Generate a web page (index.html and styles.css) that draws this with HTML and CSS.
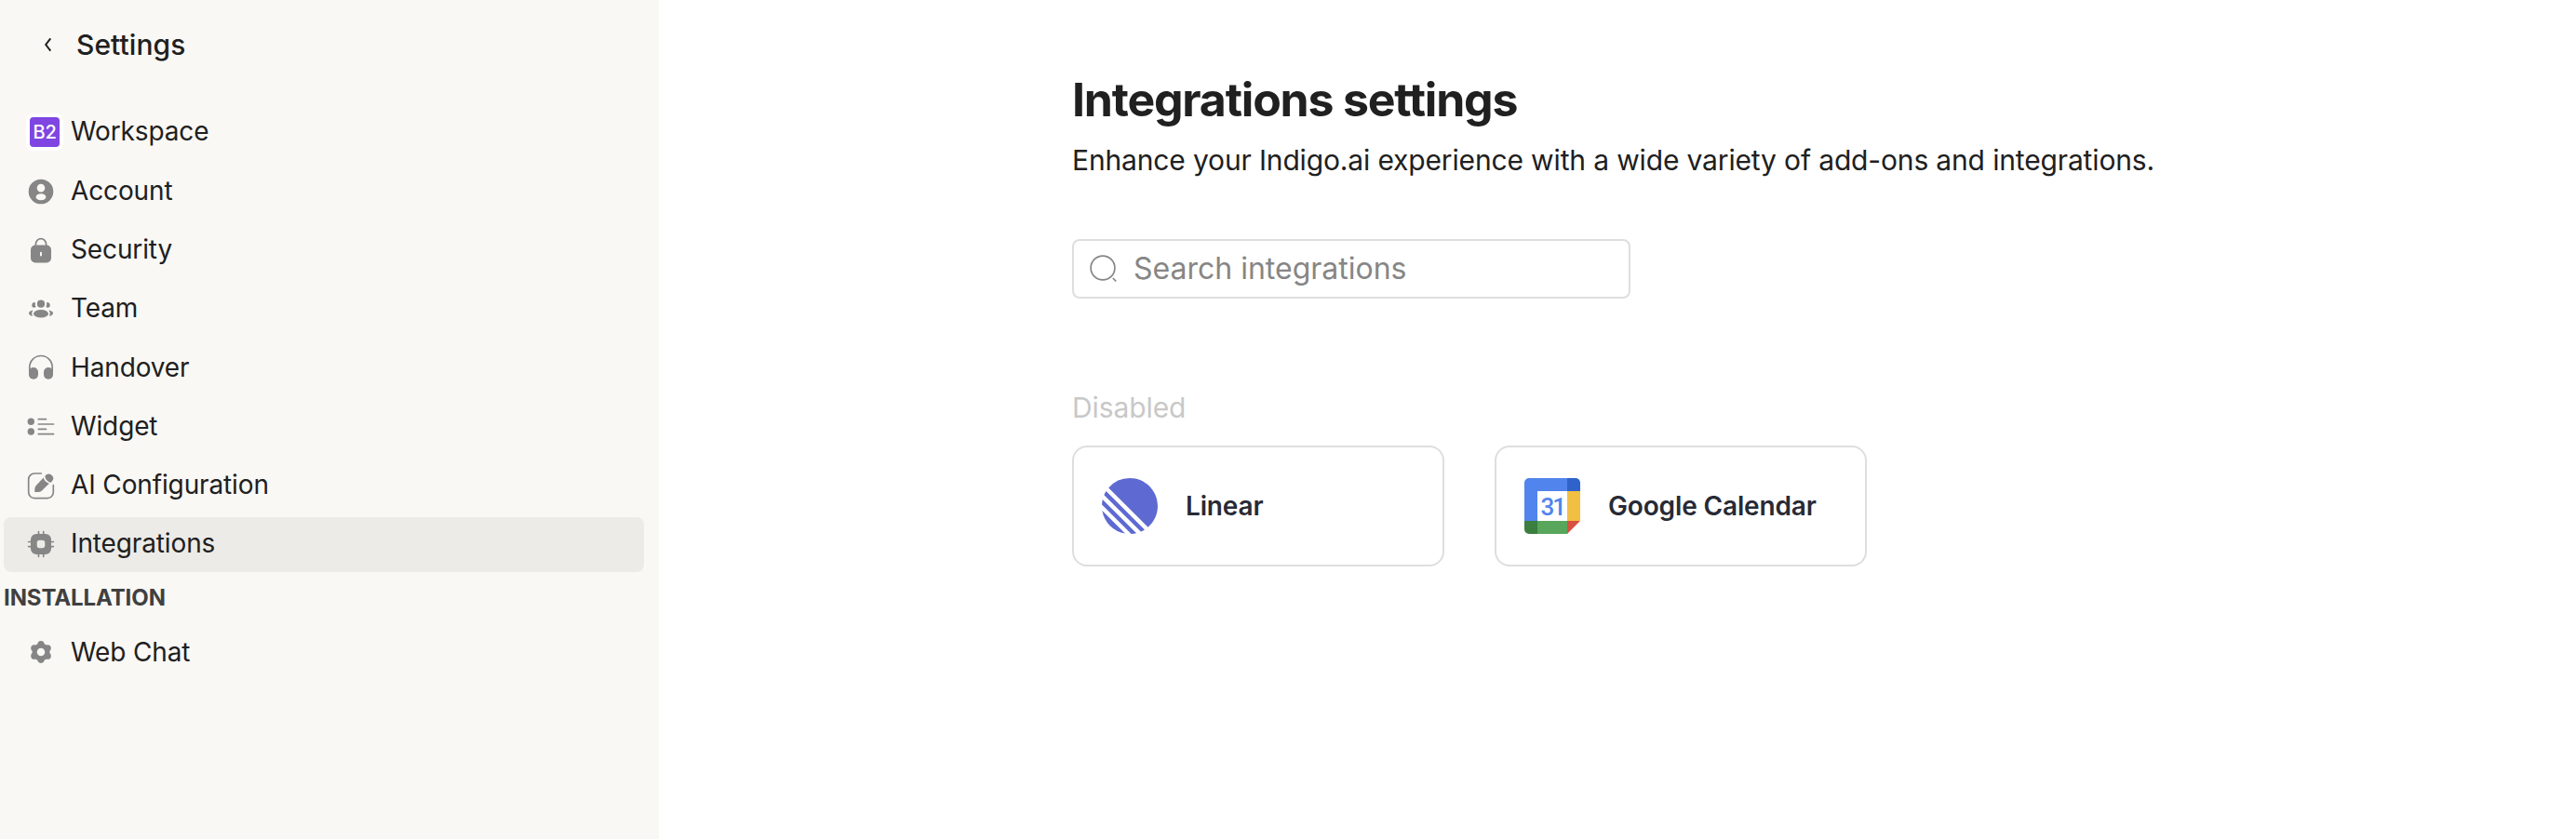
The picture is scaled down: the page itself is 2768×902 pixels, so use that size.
FILE: index.html
```html
<!DOCTYPE html>
<html lang="en">
<head>
<meta charset="utf-8">
<title>Integrations settings</title>
<link rel="stylesheet" href="styles.css">
</head>
<body>
<div class="app">
  <aside class="sidebar">
    <header class="sidebar-head">
      <svg class="back" viewBox="0 0 12 18"><path d="M8.300 2.300 3.200 9l5.100 6.700"/></svg>
      <span class="sidebar-title">Settings</span>
    </header>
    <nav class="nav">
      <a class="item item-workspace"><span class="badge">B2</span><span class="label">Workspace</span></a>
      <a class="item"><svg class="icon" viewBox="0 0 32 32"><path fill-rule="evenodd" d="M16 2.7a13.3 13.3 0 1 1 0 26.6a13.3 13.3 0 1 1 0-26.6zM16 7.8a4.3 4.3 0 1 0 0 8.6a4.3 4.3 0 1 0 0-8.6zM16 18.2c-3.2 0-5.4 1.6-5.4 3.6s2.2 3.5 5.4 3.5s5.4-1.500 5.400-3.500s-2.200-3.600-5.400-3.600z"/></svg><span class="label">Account</span></a>
      <a class="item"><svg class="icon" viewBox="0 0 32 32"><path class="line" d="M10.400 11.500V9.600a5.600 5.900 0 0 1 11.200 0v1.900"/><path fill-rule="evenodd" d="M10 10.500h12a5 5 0 0 1 5 5v9a5 5 0 0 1-5 5H10a5 5 0 0 1-5-5v-9a5 5 0 0 1 5-5zM16 17.800a1 1 0 0 0-1 1v2.600a1 1 0 0 0 2 0v-2.600a1 1 0 0 0-1-1z"/></svg><span class="label">Security</span></a>
      <a class="item"><svg class="icon" viewBox="0 0 32 32"><circle cx="16" cy="10.700" r="4.100"/><ellipse cx="16" cy="21.300" rx="8" ry="4.300"/><path id="side" d="M10 9.500a2.400 2.400 0 0 0-3.700 2.200a2.400 2.400 0 0 0 4.300 2q-1.300-2-.6-4.200zM7.600 17.600C5 18 3 19.200 3 20.800s1.800 2.700 4.100 3C5.800 22 6 19.300 7.600 17.600z"/><use href="#side" transform="matrix(-1 0 0 1 32 0)"/></svg><span class="label">Team</span></a>
      <a class="item"><svg class="icon" viewBox="0 0 32 32"><path class="line" d="M3.800 21v-5.300a12.200 12.200 0 0 1 24.400 0V21"/><rect x="3" y="16" width="10" height="12.800" rx="5"/><rect x="19" y="16" width="10" height="12.800" rx="5"/></svg><span class="label">Handover</span></a>
      <a class="item"><svg class="icon" viewBox="0 0 32 32"><circle cx="5.300" cy="10.300" r="3.700"/><circle cx="5.300" cy="21" r="3.700"/><path class="line" d="M13.300 7.700h8.200M13.300 13h16.200M13.300 18.300h8.200M13.300 23.700h16.200"/></svg><span class="label">Widget</span></a>
      <a class="item"><svg class="icon" viewBox="0 0 32 32"><path class="line" d="M16.300 3H9a6.300 6.300 0 0 0-6.300 6.300v14A6.300 6.300 0 0 0 9 29.600h14a6.300 6.300 0 0 0 6.300-6.300V15.700"/><path d="M9.300 22.900c-.1-3 .1-5.500 1.500-7L18.700 7.400q1.300 4.800 6.200 6.300L17 21.500c-1.500 1.400-4 1.700-7.700 1.400zM20.200 6q3-4 7-1.400q4 3.300.7 6.900q-.7.9-1.400 1.200Q21.500 11.700 20.200 6z"/></svg><span class="label">AI Configuration</span></a>
      <a class="item active"><svg class="icon" viewBox="0 0 32 32"><path class="line" d="M13.500 2.700V6M18.700 2.700V6M13.500 26v3.300M18.700 26v3.300M2.700 13.500H6M2.700 18.600H6M26 13.500h3.300M26 18.600h3.300"/><path fill-rule="evenodd" d="M11 5h10a6 6 0 0 1 6 6v10a6 6 0 0 1-6 6H11a6 6 0 0 1-6-6V11a6 6 0 0 1 6-6zM14.500 11.700a2.800 2.800 0 0 0-2.800 2.800v3a2.800 2.800 0 0 0 2.800 2.800h3a2.800 2.800 0 0 0 2.800-2.800v-3a2.800 2.800 0 0 0-2.800-2.800z"/></svg><span class="label">Integrations</span></a>
    </nav>
    <h2 class="section">INSTALLATION</h2>
    <nav class="nav">
      <a class="item"><svg class="icon" viewBox="0 0 32 32"><g class="gear"><circle cx="16" cy="16" r="6.900"/><path d="M16 7.700v.01M8.810 11.850v.01M8.810 20.150v.01M16 24.300v.01M23.190 20.150v.01M23.190 11.850v.01"/></g></svg><span class="label">Web Chat</span></a>
    </nav>
  </aside>
  <main class="main">
    <div class="content">
      <h1 class="title">Integrations settings</h1>
      <p class="lead">Enhance your Indigo.ai experience with a wide variety of add-ons and integrations.</p>
      <div class="search">
        <svg class="search-icon" viewBox="0 0 32 32"><circle cx="15" cy="15" r="12.900"/><path d="m25.800 26 3.400 3.400"/></svg>
        <span class="placeholder">Search integrations</span>
      </div>
      <h3 class="group">Disabled</h3>
      <div class="cards">
        <div class="card">
          <svg class="logo linear" viewBox="0 0 24 24"><path d="M2.886 4.180A11.982 11.982 0 0 1 11.990 0C18.624 0 24 5.376 24 12.009c0 3.640-1.620 6.903-4.180 9.105L2.887 4.180ZM1.817 5.626l16.556 16.556c-.524.330-1.075.620-1.650.866L.951 7.277c.247-.575.537-1.126.866-1.650ZM.322 9.163l14.515 14.515c-.710.172-1.443.282-2.195.322L0 11.358a12 12 0 0 1 .322-2.195Zm-.170 4.862 9.823 9.824a12.020 12.020 0 0 1-9.824-9.824Z"/></svg>
          <span>Linear</span>
        </div>
        <div class="card">
          <svg class="logo" viewBox="0 0 60 60">
            <path fill="#5184ec" d="M5 0h41v14H14v32H0V5a5 5 0 0 1 5-5z"/>
            <path fill="#2f63c9" d="M46 0h9a5 5 0 0 1 5 5v9H46z"/>
            <path fill="#f1bf42" d="M46 14h14v32H46z"/>
            <path fill="#58a55c" d="M14 46h32v14H14z"/>
            <path fill="#3b7e3f" d="M0 46h14v14H5a5 5 0 0 1-5-5z"/>
            <path fill="#d95040" d="M46 46h14L46 60z"/>
            <text class="day" x="17.500" y="39.600">31</text>
          </svg>
          <span>Google Calendar</span>
        </div>
      </div>
    </div>
  </main>
</div>
</body>
</html>
```
FILE: styles.css
```css
* { box-sizing: border-box; margin: 0; padding: 0; }
body {
  font-family: Inter, "Liberation Sans", sans-serif;
  color: #202020;
  background: #fff;
}

.app { display: flex; width: 2768px; height: 902px; overflow: hidden; }

/* Sidebar */
.sidebar {
  flex: none;
  width: 708px;
  background: #f9f8f5;
  padding: 24px 16px 0 4px;
}
.sidebar-head {
  display: flex;
  align-items: center;
  gap: 24px;
  height: 48px;
  padding-left: 42px;
}
.back { width: 12px; height: 18px; fill: none; stroke: #202020; stroke-width: 2; }
.sidebar-title { font-size: 30px; font-weight: 550; line-height: 48px; letter-spacing: 0.05px; }

.nav { display: flex; flex-direction: column; gap: 4px; }
.sidebar-head + .nav { margin-top: 39px; }
.item {
  display: flex;
  align-items: center;
  gap: 16px;
  height: 59.25px;
  padding-left: 24px;
  border-radius: 8px;
  font-size: 28px;
  line-height: 34px;
  letter-spacing: -0.13px;
}
.item-workspace { height: 61px; gap: 8px; }
.item.active { background: #ecebe7; }
.label { padding-bottom: 1.300px; }
.item-workspace .label { padding-bottom: 2px; }
.icon { flex: none; width: 32px; height: 32px; fill: #868686; }
.line { fill: none; stroke: #868686; stroke-width: 1.700; stroke-linecap: round; stroke-linejoin: round; }
.gear { fill: none; stroke: #868686; stroke-width: 5.200; }
.gear path { stroke-width: 7.200; stroke-linecap: round; }
.badge {
  flex: none;
  width: 40px;
  height: 40px;
  border: 4px solid #fff;
  border-radius: 8px;
  background: #7f46e1;
  color: #fff;
  font-size: 20px;
  font-weight: 500;
  line-height: 32px;
  text-align: center;
}
.section {
  margin: 13px 0 14px;
  font-size: 24px;
  font-weight: 700;
  line-height: 30px;
  letter-spacing: -0.1px;
  color: #404040;
}

/* Main */
.main { flex: 1; }
.content { width: 1172px; margin: 0 auto; padding-top: 77px; }
.title { font-size: 50px; font-weight: 700; line-height: 60px; letter-spacing: -1.200px; }
.lead { margin-top: 17px; font-size: 30px; line-height: 36px; letter-spacing: -0.150px; white-space: nowrap; }
.search {
  display: flex;
  align-items: center;
  gap: 16px;
  width: 600px;
  height: 64px;
  margin-top: 67px;
  padding-left: 16px;
  border: 2px solid #dedede;
  border-radius: 8px;
  font-size: 32px;
  color: #868686;
}
.search-icon { width: 32px; height: 32px; fill: none; stroke: #868686; stroke-width: 1.700; }
.placeholder { padding-bottom: 2px; }
.group { margin-top: 99px; font-size: 30px; font-weight: 400; line-height: 36px; letter-spacing: -0.1px; color: #c8c8c8; }
.cards { display: flex; gap: 54px; margin-top: 23px; }
.card {
  display: flex;
  align-items: center;
  gap: 30px;
  width: 400px;
  height: 130px;
  padding-left: 30px;
  border: 2px solid #dedede;
  border-radius: 16px;
  font-size: 28px;
  font-weight: 600;
  letter-spacing: -0.15px;
  color: #282a35;
}
.logo { width: 60px; height: 60px; }
.linear { fill: #5e6ad2; }
.day { font-family: Roboto, sans-serif; font-size: 26px; font-weight: 500; letter-spacing: -2px; fill: #5184ec; }
```
